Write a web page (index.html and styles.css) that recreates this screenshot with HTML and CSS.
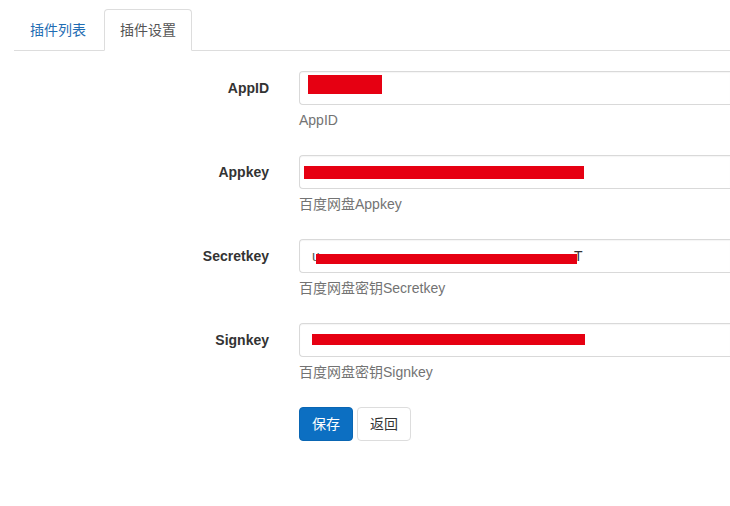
FILE: index.html
```html
<!doctype html>
<html>
  <head>
    <meta charset="utf-8">
    <title>插件设置</title>
    <meta name="viewport" content="width=device-width, initial-scale=1">
    <link rel="stylesheet" href="styles.css">
  </head>
  <body>
    <ul class="nav-tabs">
      <li><a href="#">插件列表</a></li>
      <li class="active"><a href="#">插件设置</a></li>
    </ul>

    <form class="form-horizontal">
      <div class="form-group">
        <label class="control-label">AppID</label>
        <div class="field">
          <div class="form-control">
            <span class="value"></span>
            <span class="mask mask-appid"></span>
          </div>
          <p class="help-block">AppID</p>
        </div>
      </div>

      <div class="form-group">
        <label class="control-label">Appkey</label>
        <div class="field">
          <div class="form-control">
            <span class="value"></span>
            <span class="mask mask-appkey"></span>
          </div>
          <p class="help-block">百度网盘Appkey</p>
        </div>
      </div>

      <div class="form-group">
        <label class="control-label">Secretkey</label>
        <div class="field">
          <div class="form-control">
            <span class="value">u</span>
            <span class="tail">T</span>
            <span class="mask mask-secret"></span>
          </div>
          <p class="help-block">百度网盘密钥Secretkey</p>
        </div>
      </div>

      <div class="form-group">
        <label class="control-label">Signkey</label>
        <div class="field">
          <div class="form-control">
            <span class="value"></span>
            <span class="mask mask-sign"></span>
          </div>
          <p class="help-block">百度网盘密钥Signkey</p>
        </div>
      </div>

      <div class="form-actions">
        <button type="button" class="btn btn-primary">保存</button>
        <button type="button" class="btn btn-default">返回</button>
      </div>
    </form>
  </body>
</html>
```

FILE: styles.css
```css
html {
  overflow: hidden;
}
body {
  margin: 0;
  font-family: "Liberation Sans", "Noto Sans CJK SC", sans-serif;
  font-size: 14px;
  line-height: 20px;
  color: #333;
  background: #fff;
}

/* tabs */
.nav-tabs {
  display: flex;
  list-style: none;
  margin: 0 0 0 14px;
  padding: 9px 0 0 0;
  border-bottom: 1px solid #ddd;
}
.nav-tabs li {
  margin-right: 2px;
  margin-bottom: -1px;
}
.nav-tabs a {
  display: block;
  padding: 10px 15px;
  border: 1px solid transparent;
  border-radius: 4px 4px 0 0;
  color: #1f6db3;
  text-decoration: none;
}
.nav-tabs .active a {
  color: #555;
  background: #fff;
  border-color: #ddd;
  border-bottom-color: #fff;
}

/* form */
.form-horizontal {
  padding-top: 20px;
}
.form-group {
  display: flex;
  margin-bottom: 15px;
}
.control-label {
  flex: 0 0 284px;
  box-sizing: border-box;
  padding: 7px 15px 0 0;
  text-align: right;
  font-weight: bold;
}
.field {
  flex: 1;
  min-width: 0;
  padding-left: 15px;
}
/* the inputs run on past the right edge of the window */
.form-control {
  position: relative;
  height: 34px;
  box-sizing: border-box;
  padding: 6px 12px;
  border: 1px solid #d9d9d9;
  border-right: 0;
  border-radius: 4px 0 0 4px;
  color: #555;
  box-shadow: inset 0 1px 1px rgba(0, 0, 0, .04);
}
.tail {
  position: absolute;
  left: 274px;
  top: 6px;
  color: #333;
}
.help-block {
  margin: 5px 0 10px;
  color: #737373;
}

/* censor marks over the key values */
.mask {
  position: absolute;
  background: #e60012;
}
.mask-appid {
  left: 8px;
  top: 3px;
  width: 74px;
  height: 19px;
}
.mask-appkey {
  left: 4px;
  top: 10px;
  width: 280px;
  height: 13px;
}
.mask-secret {
  left: 16px;
  top: 14px;
  width: 261px;
  height: 10px;
}
.mask-sign {
  left: 12px;
  top: 10px;
  width: 273px;
  height: 11px;
}

/* buttons */
.form-actions {
  display: flex;
  gap: 4px;
  padding-left: 299px;
}
.btn {
  height: 34px;
  padding: 6px 12px;
  font-family: inherit;
  font-size: 14px;
  line-height: 20px;
  border: 1px solid transparent;
  border-radius: 4px;
  cursor: pointer;
}
.btn-primary {
  color: #fff;
  background: #0c6fc2;
  border-color: #0a66b3;
}
.btn-default {
  color: #333;
  background: #fff;
  border-color: #ddd;
}
```
